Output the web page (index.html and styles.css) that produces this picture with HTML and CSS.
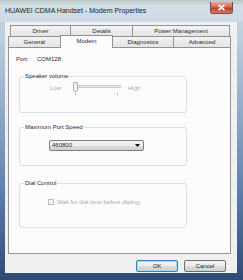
FILE: index.html
```html
<!DOCTYPE html>
<html>
<head>
<meta charset="utf-8">
<link rel="stylesheet" href="styles.css">
</head>
<body>
<div class="window">
  <div class="titlebar">
    <span class="title">HUAWEI CDMA Handset - Modem Properties</span>
    <span class="close"><svg width="9" height="7" viewBox="0 0 9 7"><path d="M1.5 0.8 L7.5 6.2 M7.5 0.8 L1.5 6.2" stroke="#fff" stroke-width="1.6"/></svg></span>
  </div>
  <div class="client">
    <div class="tabs">
      <div class="tabrow back">
        <div class="tab t-driver">Driver</div>
        <div class="tab t-details">Details</div>
        <div class="tab t-power">Power Management</div>
      </div>
      <div class="tabrow front">
        <div class="tab t-general">General</div>
        <div class="tab t-modem selected">Modem</div>
        <div class="tab t-diag">Diagnostics</div>
        <div class="tab t-adv">Advanced</div>
      </div>
    </div>
    <div class="panel">
      <div class="port"><span class="port-label">Port:</span><span>COM128</span></div>
      <div class="group g-speaker">
        <span class="legend">Speaker volume</span>
        <div class="slider-row">
          <span class="dim low">Low</span>
          <div class="slider">
            <div class="track"></div>
            <div class="thumb"></div>
            <div class="tick tick-a"></div>
            <div class="tick tick-b"></div>
          </div>
          <span class="dim high">High</span>
        </div>
      </div>
      <div class="group g-speed">
        <span class="legend">Maximum Port Speed</span>
        <div class="combo"><span>460800</span><svg width="5" height="3" viewBox="0 0 5 3"><path d="M0 0 H5 L2.5 3 Z" fill="#000"/></svg></div>
      </div>
      <div class="group g-dial">
        <span class="legend">Dial Control</span>
        <div class="check-row"><span class="checkbox"></span><span class="dim">Wait for dial tone before dialing.</span></div>
      </div>
    </div>
    <div class="buttons">
      <div class="btn default">OK</div>
      <div class="btn">Cancel</div>
    </div>
  </div>
</div>
</body>
</html>
```

FILE: styles.css
```css
html, body {
  margin: 0;
  padding: 0;
}
body {
  width: 243px;
  height: 280px;
  overflow: hidden;
  font-family: "Liberation Sans", Arial, sans-serif;
  font-size: 6px;
  color: #2b2b2b;
}
.window {
  width: 243px;
  height: 280px;
  display: flex;
  flex-direction: column;
  background: linear-gradient(to bottom, #c9d6e0 0px, #bccddb 40px, #90abc8 110px, #5e80aa 190px, #2e4b74 280px);
}
.titlebar {
  height: 22px;
  display: flex;
  justify-content: space-between;
  align-items: flex-start;
  padding-left: 5px;
  background: linear-gradient(to bottom, #b9c9c6 0px, #d3dee7 6px, #cdd9e4 22px);
}
.title {
  font-size: 7px;
  line-height: 8px;
  margin-top: 7px;
  color: #1e1e1e;
}
.close {
  width: 23px;
  height: 12px;
  margin: 2px 10px 0 0;
  border: 1px solid #7a4a4a;
  border-top: 0;
  border-radius: 0 0 3px 3px;
  box-sizing: border-box;
  background: linear-gradient(to bottom, #e6a797 0%, #d46c56 45%, #bf3b25 55%, #d67a64 100%);
  display: flex;
  align-items: center;
  justify-content: center;
}
.client {
  flex: 1;
  margin: 0 6px 7px 5px;
  background: #f0f0f0;
  padding: 3px 6px 1px 3px;
  display: flex;
  flex-direction: column;
}
.tabs {
  height: 22px;
  display: flex;
  flex-direction: column;
}
.tabrow {
  display: flex;
  height: 11px;
}
.tabrow.back {
  margin-left: 2px;
  width: 220px;
}
.tab {
  box-sizing: border-box;
  border: 1px solid #909399;
  border-bottom: 0;
  margin-right: -1px;
  background: linear-gradient(to bottom, #f3f3f3, #e4e4e4);
  display: flex;
  align-items: center;
  justify-content: center;
  line-height: 7px;
  color: #2b2b2b;
}
.t-driver { width: 61px; }
.t-details { width: 63px; }
.t-power { width: 98px; }
.t-general { width: 53px; }
.t-modem { width: 53px; }
.t-diag { width: 62px; }
.t-adv { width: 58px; }
.tab.selected {
  background: #fcfcfc;
  height: 13px;
  margin-top: -1px;
  position: relative;
  z-index: 2;
  padding-bottom: 2px;
}
.panel {
  height: 207px;
  box-sizing: border-box;
  border: 1px solid #909399;
  background: #fcfcfc;
  padding: 7px 0 0 10px;
  display: flex;
  flex-direction: column;
}
.port {
  margin-left: -3px;
  line-height: 8px;
  height: 8px;
  display: flex;
}
.port-label {
  width: 21px;
}
.group {
  box-sizing: border-box;
  width: 168px;
  border: 1px solid #d9e1e6;
  border-radius: 3px;
  display: flex;
  flex-direction: column;
}
.legend {
  align-self: flex-start;
  line-height: 8px;
  height: 8px;
  margin: -5px 0 0 4px;
  padding: 0 1px;
  background: #fcfcfc;
}
.g-speaker {
  margin-top: 13px;
  height: 37px;
}
.g-speed {
  margin-top: 14px;
  height: 39px;
}
.g-dial {
  margin-top: 17px;
  height: 45px;
}
.dim {
  color: #ababab;
}
.slider-row {
  display: flex;
  align-items: flex-start;
  margin: 2px 0 0 30px;
}
.slider-row .low {
  line-height: 8px;
  margin-top: 2px;
  width: 23px;
}
.slider {
  position: relative;
  width: 48px;
  height: 14px;
}
.track {
  margin-top: 3px;
  border: 1px solid #cbcbcb;
  border-radius: 1px;
  background: #e8e8e8;
  box-sizing: border-box;
  height: 3px;
}
.thumb {
  position: absolute;
  left: 0;
  top: 0;
  width: 5px;
  height: 10px;
  box-sizing: border-box;
  border: 1px solid #b3b3b3;
  border-radius: 1px 1px 2px 2px;
  background: #f2f2f2;
}
.tick {
  position: absolute;
  top: 11px;
  width: 1px;
  height: 2px;
  background: #bbbbbb;
}
.tick-a { left: 2px; }
.tick-b { left: 44px; }
.slider-row .high {
  line-height: 8px;
  margin: 2px 0 0 7px;
}
.combo {
  margin: 9px 0 0 29px;
  width: 95px;
  height: 11px;
  box-sizing: border-box;
  border: 1px solid #7d7d7d;
  border-radius: 2px;
  background: linear-gradient(to bottom, #f4f4f4 0%, #ebebeb 50%, #dddddd 51%, #d0d0d0 100%);
  display: flex;
  align-items: center;
  justify-content: space-between;
  padding: 0 3px 0 2px;
  line-height: 7px;
}
.check-row {
  display: flex;
  align-items: center;
  margin: 11px 0 0 28px;
  line-height: 8px;
}
.checkbox {
  width: 6px;
  height: 6px;
  box-sizing: border-box;
  border: 1px solid #bcbcbc;
  background: #f4f4f4;
  margin-right: 3px;
}
.buttons {
  display: flex;
  justify-content: flex-end;
  margin-top: 6px;
  padding-right: 5px;
  gap: 6px;
}
.btn {
  width: 42px;
  height: 12px;
  box-sizing: border-box;
  border: 1px solid #707070;
  border-radius: 2px;
  background: linear-gradient(to bottom, #f2f2f2 0%, #ebebeb 50%, #dddddd 51%, #cfcfcf 100%);
  display: flex;
  align-items: center;
  justify-content: center;
  line-height: 7px;
  color: #1e1e1e;
}
.btn.default {
  border-color: #3c7fb1;
  box-shadow: inset 0 0 0 1px #a6dbf6;
}
```
